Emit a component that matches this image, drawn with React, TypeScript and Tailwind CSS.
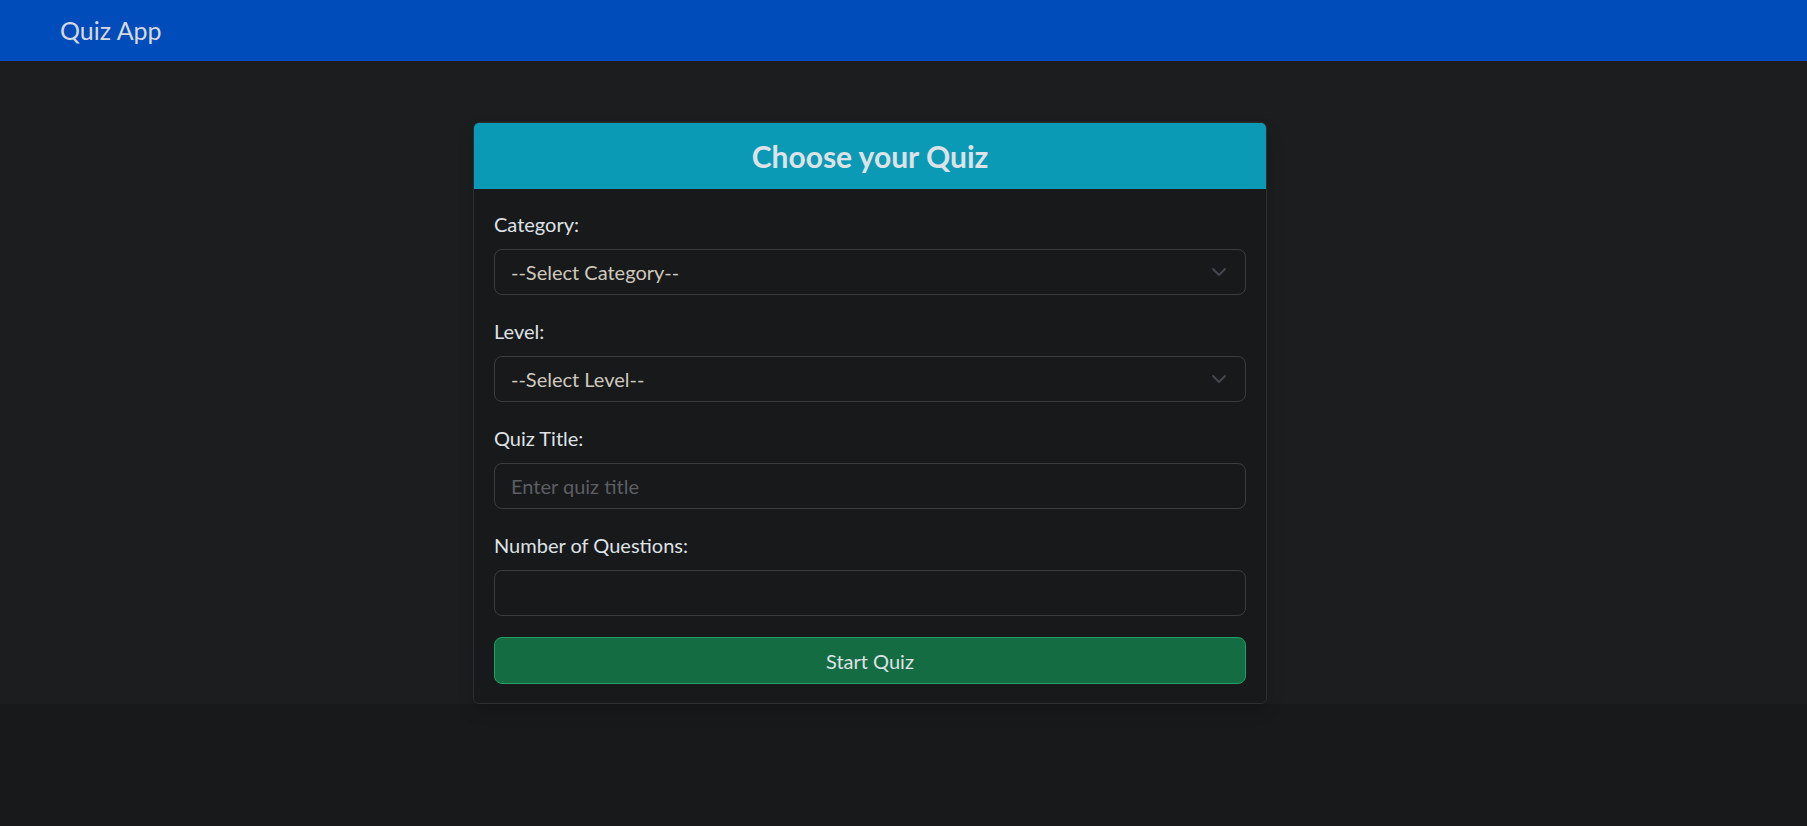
import React from "react";

function Chevron() {
  return (
    <svg
      className="pointer-events-none absolute right-[19px] top-1/2 -translate-y-1/2"
      width="16"
      height="10"
      viewBox="0 0 16 10"
      fill="none"
    >
      <path d="M2 2l6 6 6-6" stroke="#43484e" strokeWidth="2" strokeLinecap="round" strokeLinejoin="round" />
    </svg>
  );
}

function Field({ label, children }: { label: string; children: React.ReactNode }) {
  return (
    <div className="mb-[21px]">
      <label className="mb-[10px] block text-[20px] leading-[30px] text-[#dee2e6]">{label}</label>
      {children}
    </div>
  );
}

export default function App() {
  const inputCls =
    "block h-[46px] w-full rounded-[8px] border border-[#3b3d40] bg-transparent pl-4 pr-12 text-[20px] outline-none";

  return (
    <div className="min-h-[826px] bg-[#18191b] font-[Lato,sans-serif]">
      {/* Navbar */}
      <nav className="flex h-[61px] items-center bg-[#004cbb] pl-[60px]">
        <span className="text-[25px] leading-none text-[#d5d9e1]">Quiz App</span>
      </nav>

      {/* Contenido */}
      <section className="bg-[#1c1d1f] pt-[61px] pl-[473px]">
        <div className="w-[794px] overflow-hidden rounded-[6px] border border-[#2c2e31] bg-[#18191b] shadow-[0_8px_16px_rgba(0,0,0,0.15)]">
          <div className="flex h-[66px] items-center justify-center bg-[#0b9ab6]">
            <h3 className="text-[30px] font-bold leading-none text-[#dee2e6]">Choose your Quiz</h3>
          </div>

          <div className="px-5 pt-5 pb-[19px]">
            <Field label="Category:">
              <div className="relative">
                <select className={`${inputCls} appearance-none text-[#cfc9bd]`} defaultValue="">
                  <option value="">--Select Category--</option>
                  <option value="9">General Knowledge</option>
                  <option value="18">Computers</option>
                </select>
                <Chevron />
              </div>
            </Field>

            <Field label="Level:">
              <div className="relative">
                <select className={`${inputCls} appearance-none text-[#cfc9bd]`} defaultValue="">
                  <option value="">--Select Level--</option>
                  <option value="easy">Easy</option>
                  <option value="medium">Medium</option>
                  <option value="hard">Hard</option>
                </select>
                <Chevron />
              </div>
            </Field>

            <Field label="Quiz Title:">
              <input
                type="text"
                placeholder="Enter quiz title"
                className={`${inputCls} text-[#dee2e6] placeholder:text-[#5c5f63]`}
              />
            </Field>

            <Field label="Number of Questions:">
              <input type="number" className={`${inputCls} text-[#dee2e6]`} />
            </Field>

            <button className="block h-[47px] w-full rounded-[8px] border border-[#22a065] bg-[#146c43] text-[20px] text-[#dee2e6]">
              Start Quiz
            </button>
          </div>
        </div>
      </section>
    </div>
  );
}
